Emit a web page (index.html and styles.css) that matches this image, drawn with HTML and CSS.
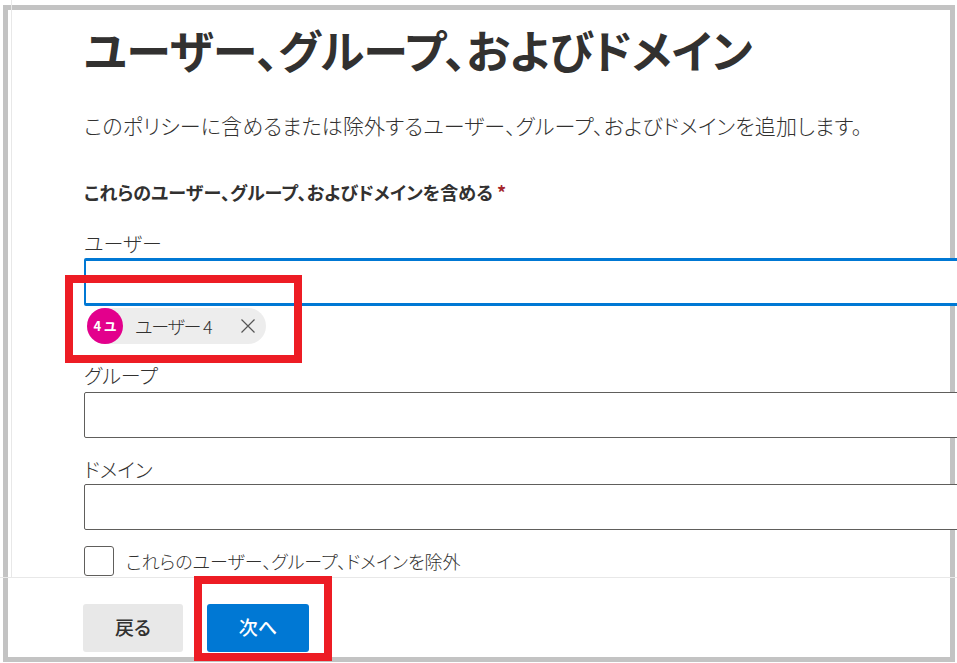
FILE: index.html
```html
<!DOCTYPE html>
<html lang="ja">
<head>
    <meta charset="UTF-8">
    <title>ユーザー、グループ、およびドメイン</title>
    <link rel="stylesheet" href="styles.css">
</head>
<body>
    <div class="frame"></div>

    <main class="content">
        <h1 class="title">ユーザー、グループ、およびドメイン</h1>
        <p class="lead">このポリシーに含めるまたは除外するユーザー、グループ、およびドメインを追加します。</p>
        <h2 class="section">これらのユーザー、グループ、およびドメインを含める <span class="required">*</span></h2>

        <label class="field-label field-label-users">ユーザー</label>
        <div class="input input-focus"></div>
        <div class="chip">
            <span class="avatar">4 ユ</span>
            <span class="chip-name">ユーザー 4</span>
            <svg class="chip-close" width="16" height="16" viewBox="0 0 16 16">
                <path d="M1.5 1.5 L14.5 14.5 M14.5 1.5 L1.5 14.5" stroke="#555" stroke-width="1.2" fill="none"/>
            </svg>
        </div>

        <label class="field-label field-label-groups">グループ</label>
        <div class="input"></div>

        <label class="field-label field-label-domains">ドメイン</label>
        <div class="input"></div>

        <div class="exclude">
            <span class="checkbox"></span>
            <span class="exclude-text">これらのユーザー、グループ、ドメインを除外</span>
        </div>
    </main>

    <footer class="footer">
        <button class="btn btn-back">戻る</button>
        <button class="btn btn-next">次へ</button>
    </footer>

    <!-- red annotation boxes -->
    <div class="mark mark-chip"></div>
    <div class="mark mark-next"></div>
</body>
</html>
```

FILE: styles.css
```css
html, body {
    margin: 0;
    height: 100%;
}
body {
    width: 957px;
    height: 663px;
    position: relative;
    overflow: hidden;
    background: #fff;
    color: #323130;
    font-family: "Noto Sans CJK JP", "Noto Sans", sans-serif;
    font-feature-settings: "palt";
}

/* grey screenshot border, sits under the inputs */
.frame {
    position: absolute;
    left: 3px;
    top: 5px;
    width: 942px;
    height: 647px;
    border: 5px solid #c3c3c3;
    z-index: -1;
}

.content {
    height: 577px;
    box-sizing: border-box;
    margin-left: 11px;
    padding: 17px 0 0 72px;
    border-left: 1px solid #e8e8e8;
    overflow: hidden;
}
.title {
    margin: 0;
    font-size: 45px;
    line-height: 66px;
    font-weight: 700;
    letter-spacing: -0.4px;
    white-space: nowrap;
}
.lead {
    margin: 27px 0 0;
    font-size: 21px;
    line-height: 30px;
    font-weight: 300;
    letter-spacing: 0.12px;
    white-space: nowrap;
}
.section {
    margin: 39px 0 0;
    font-size: 18px;
    line-height: 26px;
    font-weight: 700;
    letter-spacing: 0.1px;
    white-space: nowrap;
}
.required {
    color: #a4262c;
}

.field-label {
    display: block;
    font-size: 20px;
    line-height: 26px;
    font-weight: 300;
}
.field-label-users {
    margin: 26px 0 1px;
}
.field-label-groups {
    margin: 19px 0 3px;
}
.field-label-domains {
    margin: 19px 0 1px;
}
.input {
    width: 900px;
    height: 46px;
    box-sizing: border-box;
    border: 1px solid #605e5c;
    border-radius: 2px;
    background: #fff;
}
.input-focus {
    height: 48px;
    border: solid #0078d4;
    border-width: 3px 2px;
}

.chip {
    display: flex;
    align-items: center;
    width: 179px;
    height: 36px;
    margin: 2px 0 0 3px;
    border-radius: 18px;
    background: #ededed;
}
.avatar {
    flex: none;
    width: 36px;
    height: 36px;
    border-radius: 50%;
    background: #e3008c;
    color: #fff;
    font-size: 13px;
    font-weight: 700;
    line-height: 36px;
    text-align: center;
    white-space: nowrap;
}
.chip-name {
    margin-left: 12px;
    font-size: 18px;
    font-weight: 300;
    letter-spacing: -1.2px;
    white-space: nowrap;
}
.chip-close {
    margin-left: auto;
    margin-right: 10px;
}

.exclude {
    display: flex;
    align-items: center;
    gap: 12px;
    margin-top: 16px;
}
.checkbox {
    width: 30px;
    height: 30px;
    box-sizing: border-box;
    border: 1px solid #605e5c;
    border-radius: 3px;
}
.exclude-text {
    font-size: 18px;
    font-weight: 300;
    white-space: nowrap;
}

.footer {
    display: flex;
    gap: 24px;
    height: 86px;
    box-sizing: border-box;
    padding: 26px 0 0 83px;
    border-top: 1px solid #e8e8e8;
}
.btn {
    width: 100px;
    height: 48px;
    border: none;
    border-radius: 3px;
    font-family: inherit;
    font-feature-settings: inherit;
    font-size: 19px;
    font-weight: 500;
    padding: 0 0 3px;
}
.btn-back {
    background: #e8e8e8;
    color: #323130;
}
.btn-next {
    width: 102px;
    background: #0078d4;
    color: #fff;
}

/* red annotation boxes */
.mark {
    position: absolute;
    box-sizing: border-box;
    border: 8px solid #ed1c24;
}
.mark-chip {
    left: 65px;
    top: 275px;
    width: 237px;
    height: 88px;
}
.mark-next {
    left: 194px;
    top: 576px;
    width: 138px;
    height: 85px;
}
```
